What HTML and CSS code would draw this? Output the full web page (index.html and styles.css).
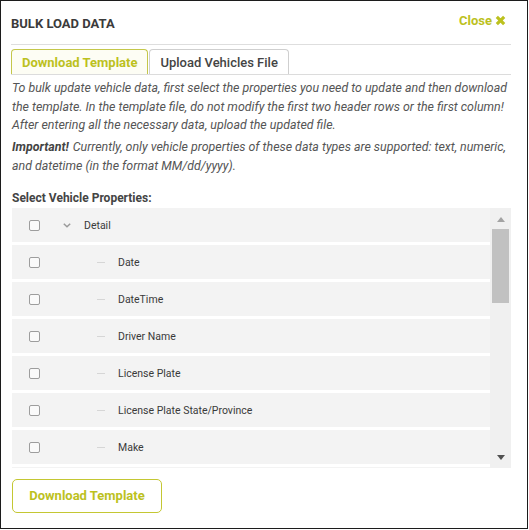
FILE: index.html
```html
<!DOCTYPE html>
<html>
<head>
<meta charset="utf-8">
<link rel="stylesheet" href="styles.css">
</head>
<body>
<div class="dialog">
  <div class="header">
    <h1 class="title">BULK LOAD DATA</h1>
    <a class="close">Close <svg class="close-icon" viewBox="0 0 12 12" width="11" height="11"><path d="M2 2 L10 10 M10 2 L2 10" stroke="currentColor" stroke-width="3.4" stroke-linecap="butt"/></svg></a>
  </div>
  <div class="tabs">
    <div class="tab active">Download Template</div>
    <div class="tab">Upload Vehicles File</div>
  </div>
  <p class="intro">To bulk update vehicle data, first select the properties you need to update and then download the template. In the template file, do not modify the first two header rows or the first column! After entering all the necessary data, upload the updated file.</p>
  <p class="intro note"><b>Important!</b> Currently, only vehicle properties of these data types are supported: text, numeric, and datetime (in the format MM/dd/yyyy).</p>
  <div class="label">Select Vehicle Properties:</div>
  <div class="listbox">
    <div class="rows">
      <div class="row"><span class="check"></span><svg class="chevron" viewBox="0 0 8 5" width="8" height="5"><path d="M0.8 0.8 L4 3.8 L7.2 0.8" fill="none" stroke="#9a9a9a" stroke-width="1.5"/></svg><span class="name">Detail</span></div>
      <div class="row"><span class="check"></span><span class="dash"></span><span class="name">Date</span></div>
      <div class="row"><span class="check"></span><span class="dash"></span><span class="name">DateTime</span></div>
      <div class="row"><span class="check"></span><span class="dash"></span><span class="name">Driver Name</span></div>
      <div class="row"><span class="check"></span><span class="dash"></span><span class="name">License Plate</span></div>
      <div class="row"><span class="check"></span><span class="dash"></span><span class="name">License Plate State/Province</span></div>
      <div class="row"><span class="check"></span><span class="dash"></span><span class="name">Make</span></div>
      <div class="row"><span class="check"></span><span class="dash"></span><span class="name">Model</span></div>
    </div>
    <div class="scrollbar">
      <span class="arrow up"></span>
      <div class="thumb"></div>
      <span class="arrow down"></span>
    </div>
  </div>
  <button class="btn"><span>Download Template</span></button>
</div>
</body>
</html>
```

FILE: styles.css
```css
* { box-sizing: border-box; }
html, body { margin: 0; padding: 0; background: #fff; }
body { font-family: Roboto, "Liberation Sans", sans-serif; color: #333; }

.dialog {
  width: 528px;
  height: 529px;
  border: 1px solid #1c1c1c;
  padding: 0 16px 0 10px;
  display: flex;
  flex-direction: column;
  overflow: hidden;
}

.header {
  height: 44px;
  display: flex;
  justify-content: space-between;
  align-items: flex-start;
  border-bottom: 1px solid #dedede;
  flex: none;
}
.title {
  margin: 15px 0 0 0;
  font-size: 13px;
  line-height: 15px;
  font-weight: 700;
  color: #3b3b3b;
}
.close {
  margin: 12px 5px 0 0;
  font-size: 13px;
  line-height: 15px;
  font-weight: 700;
  color: #bcc11e;
  display: flex;
  align-items: center;
  gap: 3px;
}
.close-icon { display: block; }

.tabs {
  margin-top: 4px;
  display: flex;
  border-bottom: 1px solid #dcdcdc;
  flex: none;
}
.tab {
  height: 25px;
  padding: 0 10px;
  border: 1px solid #cfcfcf;
  border-bottom: none;
  border-radius: 4px 4px 0 0;
  font-size: 13px;
  line-height: 25px;
  font-weight: 500;
  color: #444;
  background: #fff;
  margin-right: 1px;
}
.tab.active {
  border-color: #c4c74a;
  color: #bcc11e;
  font-weight: 700;
  background: #fdfdf4;
}

.intro {
  margin: 4px 0 0 1px;
  font-size: 12.4px;
  line-height: 18.5px;
  font-style: italic;
  color: #555;
  flex: none;
}
.intro.note { margin-top: 3.5px; }
.intro b { color: #444; margin-right: 1px; }

.label {
  margin: 14px 0 0 1px;
  font-size: 12px;
  line-height: 19px;
  font-weight: 700;
  color: #444;
  flex: none;
}

.listbox {
  margin-left: 1px;
  height: 260px;
  display: flex;
  overflow: hidden;
  flex: none;
}
.rows {
  flex: 1;
  overflow: hidden;
}
.row {
  height: 34px;
  margin-bottom: 3px;
  background: #f3f3f3;
  display: flex;
  align-items: center;
}
.check {
  width: 11px;
  height: 11px;
  margin-left: 17px;
  border: 1px solid #9d9d9d;
  border-radius: 2px;
  background: #fafafa;
  flex: none;
}
.chevron { margin-left: 23px; flex: none; display: block; }
.dash {
  width: 8px;
  height: 1px;
  margin-left: 57px;
  background: #d6d6d6;
  flex: none;
}
.name {
  margin-left: 13px;
  font-size: 10.5px;
  color: #3a3a3a;
}

.scrollbar {
  width: 21px;
  background: #f0f0f0;
  display: flex;
  flex-direction: column;
  align-items: center;
  flex: none;
}
.arrow {
  width: 0;
  height: 0;
  border-left: 4.5px solid transparent;
  border-right: 4.5px solid transparent;
}
.arrow.up {
  margin-top: 9px;
  border-bottom: 5px solid #a3a3a3;
}
.arrow.down {
  margin-top: 152px;
  border-top: 5px solid #505050;
}
.thumb {
  width: 17px;
  height: 74px;
  margin-top: 7px;
  background: #c1c1c1;
}

.btn {
  margin-top: 11px;
  margin-left: 1px;
  width: 150px;
  height: 34px;
  flex: none;
  border: 1px solid #c4c733;
  border-radius: 5px;
  background: #fff;
  font-family: Roboto, "Liberation Sans", sans-serif;
  font-size: 13px;
  line-height: 16px;
  white-space: nowrap;
  font-weight: 700;
  color: #bcc11e;
  padding: 0;
  display: flex;
  align-items: center;
  justify-content: center;
  align-self: flex-start;
}
```
